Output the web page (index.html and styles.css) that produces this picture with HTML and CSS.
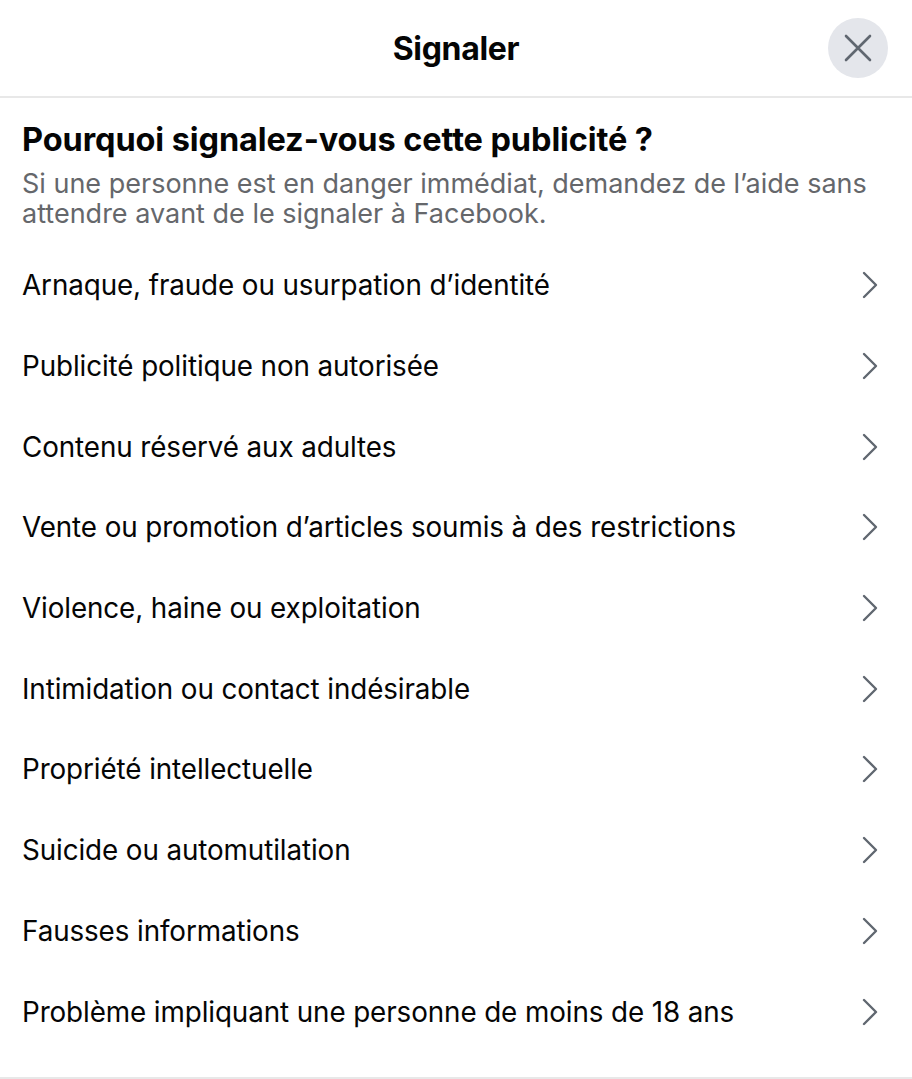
FILE: index.html
```html
<!DOCTYPE html>
<html lang="fr">
<head>
<meta charset="utf-8">
<title>Signaler</title>
<link rel="stylesheet" href="styles.css">
</head>
<body>
<div class="dialog">
  <header class="header">
    <h1 class="title">Signaler</h1>
    <button class="close" aria-label="Fermer">
      <svg width="28" height="28" viewBox="0 0 28 28"><path d="M2 2 L26 26 M26 2 L2 26" stroke="#606770" stroke-width="2.6" stroke-linecap="round" fill="none"/></svg>
    </button>
  </header>
  <section class="intro">
    <h2 class="question">Pourquoi signalez-vous cette publicité ?</h2>
    <p class="hint">Si une personne est en danger immédiat, demandez de l’aide sans attendre avant de le signaler à Facebook.</p>
  </section>
  <ul class="list">
    <li class="item"><span>Arnaque, fraude ou usurpation d’identité</span><svg class="chev" viewBox="0 0 16 28"><path d="M2 2 L14 14 L2 26" /></svg></li>
    <li class="item"><span>Publicité politique non autorisée</span><svg class="chev" viewBox="0 0 16 28"><path d="M2 2 L14 14 L2 26" /></svg></li>
    <li class="item"><span>Contenu réservé aux adultes</span><svg class="chev" viewBox="0 0 16 28"><path d="M2 2 L14 14 L2 26" /></svg></li>
    <li class="item"><span>Vente ou promotion d’articles soumis à des restrictions</span><svg class="chev" viewBox="0 0 16 28"><path d="M2 2 L14 14 L2 26" /></svg></li>
    <li class="item"><span>Violence, haine ou exploitation</span><svg class="chev" viewBox="0 0 16 28"><path d="M2 2 L14 14 L2 26" /></svg></li>
    <li class="item"><span>Intimidation ou contact indésirable</span><svg class="chev" viewBox="0 0 16 28"><path d="M2 2 L14 14 L2 26" /></svg></li>
    <li class="item"><span>Propriété intellectuelle</span><svg class="chev" viewBox="0 0 16 28"><path d="M2 2 L14 14 L2 26" /></svg></li>
    <li class="item"><span>Suicide ou automutilation</span><svg class="chev" viewBox="0 0 16 28"><path d="M2 2 L14 14 L2 26" /></svg></li>
    <li class="item"><span>Fausses informations</span><svg class="chev" viewBox="0 0 16 28"><path d="M2 2 L14 14 L2 26" /></svg></li>
    <li class="item"><span>Problème impliquant une personne de moins de 18 ans</span><svg class="chev" viewBox="0 0 16 28"><path d="M2 2 L14 14 L2 26" /></svg></li>
  </ul>
</div>
</body>
</html>
```
FILE: styles.css
```css
* { box-sizing: border-box; }
html, body { margin: 0; padding: 0; background: #fff; }
body {
  font-family: Inter, "Noto Sans", sans-serif;
  color: #050505;
  width: 912px;
  height: 1079px;
  overflow: hidden;
}
.dialog {
  display: flex;
  flex-direction: column;
  height: 1079px;
  border-bottom: 2px solid #e8e8e8;
}
.header {
  position: relative;
  height: 98px;
  flex: none;
  display: flex;
  align-items: center;
  justify-content: center;
  border-bottom: 2px solid #e8e8e8;
}
.title {
  margin: 0;
  font-size: 32px;
  font-weight: 700;
  letter-spacing: -0.3px;
}
.close {
  position: absolute;
  right: 24px;
  top: 18px;
  width: 60px;
  height: 60px;
  border-radius: 50%;
  border: none;
  background: #e4e6eb;
  display: flex;
  align-items: center;
  justify-content: center;
  padding: 0;
}
.intro {
  padding: 23px 22px 0 22px;
}
.question {
  margin: 0;
  font-size: 32.5px;
  font-weight: 700;
  line-height: 38px;
  letter-spacing: -0.1px;
}
.hint {
  margin: 10px 0 0 0;
  font-size: 27px;
  line-height: 30px;
  color: #65676b;
}
.list {
  list-style: none;
  margin: 16px 0 0 0;
  padding: 0;
}
.item {
  height: 80.7px;
  display: flex;
  align-items: center;
  justify-content: space-between;
  padding: 0 34px 0 22px;
  font-size: 27.8px;
  letter-spacing: -0.1px;
}
.chev {
  width: 16px;
  height: 28px;
  fill: none;
  stroke: #606770;
  stroke-width: 2.4;
  stroke-linecap: round;
  stroke-linejoin: round;
}
```
